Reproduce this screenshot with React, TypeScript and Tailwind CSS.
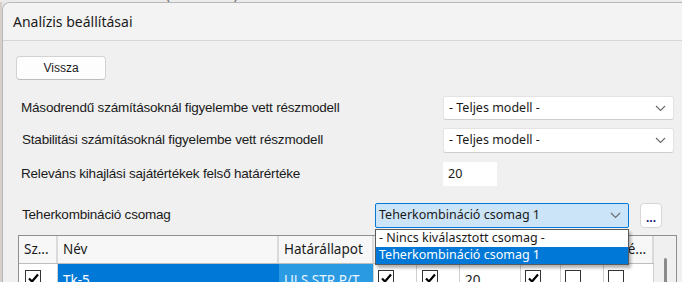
import React from "react";

const Check = () => (
  <svg width="13" height="13" viewBox="0 0 13 13" className="block">
    <path d="M2 6.5 L5 9.5 L11 2.5" fill="none" stroke="#000" strokeWidth="2.2" />
  </svg>
);

const Box = ({ checked }: { checked?: boolean }) => (
  <div className="w-[16px] h-[16px] border border-[#333] bg-white flex items-center justify-center">
    {checked ? <Check /> : null}
  </div>
);

const Chevron = () => (
  <svg width="11" height="7" viewBox="0 0 11 7" className="block">
    <path d="M1 1 L5.5 5.5 L10 1" fill="none" stroke="#6b6b6b" strokeWidth="1.1" />
  </svg>
);

const Select = ({ text, h }: { text: string; h: string }) => (
  <div
    className={`w-[231px] ${h} bg-white border border-[#e3e3e3] border-b-[#cdcdcd] rounded-[3px] flex items-center justify-between pl-[5px] pr-[7px] font-['Noto_Sans',sans-serif] text-[12.5px] text-[#1a1a1a]`}
  >
    <span>{text}</span>
    <Chevron />
  </div>
);

export default function App() {
  const cols = [39, 221, 95, 43, 43, 61, 40, 43, 50];
  return (
    <div className="w-[682px] h-[282px] overflow-hidden bg-[#e6e6e6] flex flex-col font-['Liberation_Sans',sans-serif]">
      <div className="h-[2px] overflow-hidden bg-[#ebebeb] shrink-0">
        <div className="-mt-[11px] pl-[30px] text-[13px] leading-[13px] text-[#666] whitespace-nowrap font-['Noto_Sans',sans-serif]">
          AXIS VM - Consteel 15 (build 2016) - test
        </div>
      </div>
      <div className="flex flex-1 min-h-0">
        <div className="w-[2px] bg-[#d8d0c8] shrink-0" />
        <div className="flex-1 flex flex-col border-t border-l border-[#b8b8b8] rounded-tl-[8px] bg-[#f0f0f0] overflow-hidden">
          <div className="h-[38px] shrink-0 bg-[#f3f3f3] border-b border-[#d6d6d6] flex items-center pl-[10px] font-['Noto_Sans',sans-serif] text-[14px] text-[#1b1b1b]">
            Analízis beállításai
          </div>
          <div className="flex flex-col pl-[13px]">
            <div className="mt-[15px] w-[90px] h-[24px] bg-[#fdfdfd] border border-[#d3d3d3] border-b-[#bdbdbd] rounded-[4px] flex items-center justify-center text-[12px] text-[#1a1a1a]">
              Vissza
            </div>

            <div className="mt-[16px] ml-[5px] flex items-center h-[24px]">
              <div className="w-[422px] text-[13.5px] text-[#1a1a1a] tracking-[-0.2px]">
                Másodrendű számításoknál figyelembe vett részmodell
              </div>
              <Select text="- Teljes modell -" h="h-[24px]" />
            </div>

            <div className="mt-[8px] ml-[5px] flex items-center h-[25px]">
              <div className="w-[422px] text-[13.5px] text-[#1a1a1a] tracking-[-0.2px] pl-[1px]">
                Stabilitási számításoknál figyelembe vett részmodell
              </div>
              <Select text="- Teljes modell -" h="h-[25px]" />
            </div>

            <div className="mt-[9px] ml-[5px] flex items-center h-[24px]">
              <div className="w-[422px] text-[13.5px] text-[#1a1a1a] tracking-[-0.2px]">
                Releváns kihajlási sajátértékek felső határértéke
              </div>
              <div className="w-[54px] h-[24px] bg-white flex items-center pl-[5px] font-['Noto_Sans',sans-serif] text-[12.5px] text-[#1a1a1a]">
                20
              </div>
            </div>

            <div className="mt-[17px] ml-[5px] flex items-center h-[25px]">
              <div className="w-[354px] text-[13.5px] text-[#1a1a1a] tracking-[-0.2px] pl-[1px]">
                Teherkombináció csomag
              </div>
              <div className="relative w-[254px] h-[25px]">
                <div className="w-full h-full bg-[#cce4f7] border border-[#0078d7] rounded-[2px] flex items-center justify-between pl-[3px] pr-[7px] font-['Noto_Sans',sans-serif] text-[12.5px] text-[#1a1a1a]">
                  <span>Teherkombináció csomag 1</span>
                  <Chevron />
                </div>
                <div className="absolute left-0 top-[26px] w-[254px] z-10 border border-[#5a5a5a] bg-white shadow-[2px_3px_3px_rgba(0,0,0,0.3)] font-['Noto_Sans',sans-serif] text-[12.5px]">
                  <div className="h-[17px] flex items-center pl-[3px] text-[#1a1a1a]">- Nincs kiválasztott csomag -</div>
                  <div className="h-[17px] flex items-center pl-[3px] bg-[#0078d7] text-white">Teherkombináció csomag 1</div>
                </div>
              </div>
              <div className="ml-[11px] w-[22px] h-[25px] bg-white border border-[#d6d6d6] rounded-[4px] flex items-end justify-center pb-[4px] text-[12px] leading-[10px] text-[#1a1a7a] font-bold">
                ...
              </div>
            </div>

            <div className="mt-[7px] ml-[2px] w-[659px] border border-[#8f8f8f] bg-white flex">
              <div className="flex flex-col">
                <div className="flex h-[28px] bg-[#f7f7f7] border-b border-[#bdbdbd] font-['Noto_Sans',sans-serif] text-[13.5px] text-[#1a1a1a]">
                  {["Sz...", "Név", "Határállapot", "", "", "", "", "", "Szé..."].map((t, i) => (
                    <div
                      key={i}
                      style={{ width: cols[i] }}
                      className={`h-full border-r-2 border-[#dadada] flex items-center overflow-hidden whitespace-nowrap ${i === 8 ? "pl-[10px]" : "pl-[5px]"}`}
                    >
                      {t}
                    </div>
                  ))}
                </div>
                <div className="flex h-[30px] font-['Noto_Sans',sans-serif] text-[13.5px]">
                  <div style={{ width: cols[0] }} className="border-r border-[#d0d0d0] pl-[6px] pt-[6px]">
                    <Box checked />
                  </div>
                  <div style={{ width: cols[1] }} className="bg-[#0078d7] text-white pl-[5px] pt-[6px] border-r border-[#0078d7]">
                    Tk-5
                  </div>
                  <div style={{ width: cols[2] }} className="bg-[#2a9be3] text-[#e8f4ff] pl-[5px] pt-[6px] whitespace-nowrap overflow-hidden border-r border-[#d0d0d0]">
                    ULS STR P/T
                  </div>
                  <div style={{ width: cols[3] }} className="border-r border-[#d0d0d0] pl-[4px] pt-[6px]">
                    <Box checked />
                  </div>
                  <div style={{ width: cols[4] }} className="border-r border-[#d0d0d0] pl-[5px] pt-[6px]">
                    <Box checked />
                  </div>
                  <div style={{ width: cols[5] }} className="border-r border-[#d0d0d0] pl-[5px] pt-[6px] text-[#1a1a1a]">
                    20
                  </div>
                  <div style={{ width: cols[6] }} className="border-r border-[#d0d0d0] pl-[4px] pt-[6px]">
                    <Box checked />
                  </div>
                  <div style={{ width: cols[7] }} className="border-r border-[#d0d0d0] pl-[4px] pt-[6px]">
                    <Box />
                  </div>
                  <div style={{ width: cols[8] }} className="border-r border-[#d0d0d0] pl-[4px] pt-[6px]">
                    <Box />
                  </div>
                </div>
              </div>
              <div className="w-[22px] bg-[#f0f0f0] flex justify-center pt-[22px]">
                <div className="w-[3px] h-[60px] bg-[#8a8a8a] rounded-full" />
              </div>
            </div>
          </div>
        </div>
      </div>
    </div>
  );
}
